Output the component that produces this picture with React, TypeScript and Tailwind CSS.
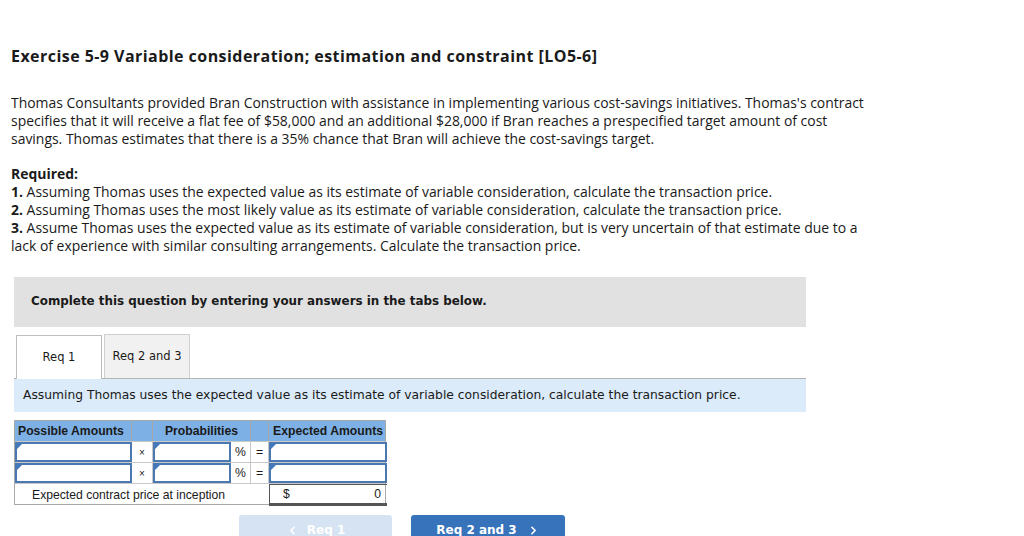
import React from 'react';
import { ChevronLeft, ChevronRight } from 'lucide-react';

const Triangle = () => (
  <span className="absolute left-0 top-0 w-0 h-0 border-t-[5px] border-t-[#3f77c0] border-r-[5px] border-r-transparent" />
);

const InputCell = () => (
  <div className="relative h-full border-2 border-[#4a78b0] bg-white">
    <Triangle />
  </div>
);

export default function App() {
  return (
    <div className="w-[1024px] h-[536px] overflow-hidden bg-white text-[#1a1a1a]">
      <div className="pl-[11px] pt-[45px]">
        <h1 className="font-['Open_Sans',sans-serif] font-bold text-[16px] tracking-[0.45px] leading-[22px]">
          Exercise 5-9 Variable consideration; estimation and constraint [LO5-6]
        </h1>

        <div className="mt-[27px] font-['Open_Sans',sans-serif] text-[13.95px] leading-[18px] w-[860px]">
          <p>
            Thomas Consultants provided Bran Construction with assistance in implementing various cost-savings initiatives. Thomas's contract specifies that it will receive a flat fee of $58,000 and an additional $28,000 if Bran reaches a prespecified target amount of cost savings. Thomas estimates that there is a 35% chance that Bran will achieve the cost-savings target.
          </p>
          <p className="mt-[17px] font-bold">Required:</p>
          <p><b>1.</b> Assuming Thomas uses the expected value as its estimate of variable consideration, calculate the transaction price.</p>
          <p><b>2.</b> Assuming Thomas uses the most likely value as its estimate of variable consideration, calculate the transaction price.</p>
          <p>
            <b>3.</b> Assume Thomas uses the expected value as its estimate of variable consideration, but is very uncertain of that estimate due to a lack of experience with similar consulting arrangements. Calculate the transaction price.
          </p>
        </div>
      </div>

      <div className="ml-[14px] mt-[22px] w-[792px]">
        <div className="h-[50px] bg-[#e1e1e1] flex items-center pl-[17px] font-['DejaVu_Sans',sans-serif] font-bold text-[11.9px]">
          Complete this question by entering your answers in the tabs below.
        </div>

        <div className="mt-[7px] flex items-end gap-[2px] pl-[2px] font-['DejaVu_Sans',sans-serif] text-[11.5px]">
          <div className="w-[86px] h-[44px] border border-[#bdbdbd] border-b-0 bg-white flex items-center justify-center relative top-[1px]">
            Req 1
          </div>
          <div className="w-[86px] h-[44px] border border-[#cfcfcf] border-b-0 bg-[#f1f1f1] flex items-center justify-center">
            Req 2 and 3
          </div>
        </div>

        <div className="h-[34px] border-t border-[#b5b5b5] bg-[#dbebf9] flex items-center pl-[9px] font-['DejaVu_Sans',sans-serif] text-[12.3px]">
          Assuming Thomas uses the expected value as its estimate of variable consideration, calculate the transaction price.
        </div>

        <div className="mt-[8px] w-[372px] border border-[#a8a8a8] font-['Liberation_Sans',Arial,sans-serif] text-[12.2px]">
          <div className="grid grid-cols-[117px_21px_78px_20px_18px_118px] h-[20px] bg-[#7db1e6] font-bold">
            <div className="pl-[3px] flex items-center border-r border-[#a8a8a8]">Possible Amounts</div>
            <div className="border-r border-[#a8a8a8]" />
            <div className="col-span-2 flex items-center justify-center border-r border-[#a8a8a8]">Probabilities</div>
            <div className="border-r border-[#a8a8a8]" />
            <div className="flex items-center justify-center">Expected Amounts</div>
          </div>
          {[0, 1].map((r) => (
            <div key={r} className="grid grid-cols-[117px_21px_78px_20px_18px_118px] h-[21px] border-t border-[#c8c8c8]">
              <InputCell />
              <div className="flex items-center justify-center text-[10px] border-r border-[#c8c8c8]">×</div>
              <InputCell />
              <div className="flex items-center justify-center border-r border-[#c8c8c8]">%</div>
              <div className="flex items-center justify-center border-r border-[#c8c8c8]">=</div>
              <InputCell />
            </div>
          ))}
          <div className="grid grid-cols-[254px_118px] h-[21px] border-t border-[#c8c8c8]">
            <div className="pl-[17px] flex items-center">Expected contract price at inception</div>
            <div className="flex items-center justify-between px-[6px] border-l border-t border-[#555] border-b-[3px] border-b-[#555]">
              <span className="pl-[7px]">$</span>
              <span>0</span>
            </div>
          </div>
        </div>

        <div className="mt-[10px] flex gap-[19px] pl-[225px] font-['DejaVu_Sans',sans-serif] font-bold text-[12px]">
          <div className="w-[153px] h-[30px] rounded-t-[3px] bg-[#d6e3f2] text-white flex items-center justify-center gap-[8px]">
            <ChevronLeft size={13} strokeWidth={3} />
            <span>Req 1</span>
          </div>
          <div className="w-[154px] h-[30px] rounded-t-[3px] bg-[#3773ba] text-white flex items-center justify-center gap-[10px]">
            <span>Req 2 and 3</span>
            <ChevronRight size={13} strokeWidth={3} />
          </div>
        </div>
      </div>
    </div>
  );
}
